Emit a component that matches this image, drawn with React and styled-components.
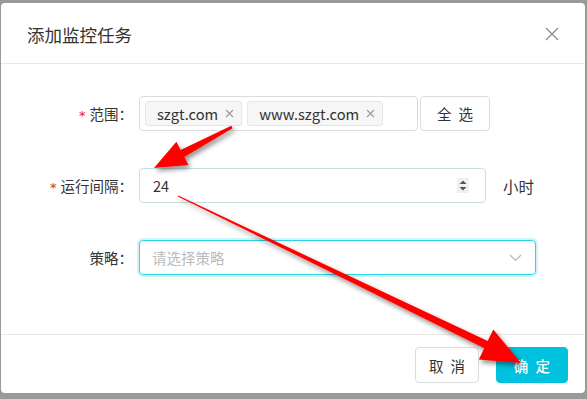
import React from 'react'
import styled, { createGlobalStyle } from 'styled-components'

const GlobalStyle = createGlobalStyle`
  html, body {
    margin: 0;
    padding: 0;
    background: #9a9a9a;
    font-family: "Noto Sans CJK SC", "Noto Sans", sans-serif;
  }
`

// Icons
const CloseIcon = () => (
  <svg width="14" height="14" viewBox="0 0 14 14">
    <path d="M1 1 L13 13 M13 1 L1 13" stroke="#8c8c8c" strokeWidth="1.3" />
  </svg>
)

const TagClose = () => (
  <svg width="9" height="9" viewBox="0 0 9 9">
    <path d="M1 1 L8 8 M8 1 L1 8" stroke="#999" strokeWidth="1.1" />
  </svg>
)

const Spinner = () => (
  <svg width="12" height="15" viewBox="0 0 12 15">
    <rect width="12" height="15" fill="#f0f0f0" />
    <path d="M6 2.5 L9.5 6 L2.5 6 Z M6 12.5 L9.5 9 L2.5 9 Z" fill="#555" />
  </svg>
)

const Chevron = () => (
  <svg width="13" height="8" viewBox="0 0 13 8">
    <path d="M1 1 L6.5 6.5 L12 1" stroke="#b5b5b5" strokeWidth="1.2" fill="none" />
  </svg>
)

// Annotation arrows drawn over the dialog
const Arrows = () => (
  <ArrowLayer width="587" height="399" viewBox="0 0 587 399">
    <defs>
      <filter id="sh" x="-20%" y="-20%" width="140%" height="140%">
        <feDropShadow dx="2" dy="3" stdDeviation="2.5" floodColor="#000" floodOpacity="0.45" />
      </filter>
    </defs>
    <g filter="url(#sh)" fill="#ff0000">
      <polygon points="232.7,128.3 231.3,125.7 180.6,150 176.4,141.8 154,168 188.4,165 184.3,157" />
      <polygon points="178.2,195.6 177.8,196.4 484.3,348.2 478.8,359.5 521,363 493.3,329.5 487.7,341" />
    </g>
  </ArrowLayer>
)

const App = () => {
  return (
    <>
      <GlobalStyle />
      <Modal>
        <Header>
          <Title>添加监控任务</Title>
          <CloseButton><CloseIcon /></CloseButton>
        </Header>
        <Body>
          <Row>
            <Label><Star>*</Star>范围：</Label>
            <TagBox>
              <Tag>szgt.com<TagClose /></Tag>
              <Tag>www.szgt.com<TagClose /></Tag>
            </TagBox>
            <Button $width={70}>全 选</Button>
          </Row>
          <Row>
            <Label><Star>*</Star>运行间隔：</Label>
            <NumberInput>
              <span>24</span>
              <Spinner />
            </NumberInput>
            <Unit>小时</Unit>
          </Row>
          <Row>
            <Label>策略：</Label>
            <Select>
              <Placeholder>请选择策略</Placeholder>
              <Chevron />
            </Select>
          </Row>
        </Body>
        <Footer>
          <Button $width={64} $height={36}>取 消</Button>
          <Button $width={72} $height={36} $primary>确 定</Button>
        </Footer>
        <Arrows />
      </Modal>
    </>
  )
}

// Styles
const Modal = styled.div`
  position: relative;
  margin: 3px 0 0 1px;
  width: 584px;
  height: 390px;
  background: #fff;
  border-radius: 4px;
  display: flex;
  flex-direction: column;
`

const ArrowLayer = styled.svg`
  position: absolute;
  left: -1px;
  top: -3px;
  pointer-events: none;
`

const Header = styled.div`
  height: 60px;
  padding: 0 26px 0 26px;
  display: flex;
  align-items: center;
  justify-content: space-between;
  border-bottom: 1px solid #e8e8e8;
`

const Title = styled.div`
  font-size: 17.5px;
  color: #333;
  margin-top: 2px;
`

const CloseButton = styled.div`
  display: flex;
  margin-top: 2px;
`

const Body = styled.div`
  flex: 1;
  padding-top: 32px;
  display: flex;
  flex-direction: column;
  gap: 37px;
`

const Row = styled.div`
  display: flex;
  align-items: center;
  height: 35px;
`

const Label = styled.div`
  width: 138px;
  padding-right: 6px;
  box-sizing: border-box;
  text-align: right;
  font-size: 14.5px;
  color: #333;
`

const Star = styled.span`
  color: #e02020;
  margin-right: 4px;
  font-family: "DejaVu Sans", sans-serif;
  font-size: 13px;
`

const TagBox = styled.div`
  box-sizing: border-box;
  width: 279px;
  height: 35px;
  border: 1px solid #dcdcdc;
  border-radius: 4px;
  display: flex;
  align-items: center;
  gap: 5px;
  padding-left: 5px;
`

const Tag = styled.div`
  box-sizing: border-box;
  height: 25px;
  display: flex;
  align-items: center;
  gap: 7px;
  padding: 0 7px 0 11px;
  background: #f6f6f6;
  border: 1px solid #e6e6e6;
  border-radius: 3px;
  font-size: 14.7px;
  color: #333;
`

const Button = styled.div`
  box-sizing: border-box;
  width: ${p => p.$width}px;
  height: ${p => p.$height || 35}px;
  margin-left: 2px;
  display: flex;
  align-items: center;
  justify-content: center;
  border: 1px solid ${p => p.$primary ? '#00c1de' : '#dcdcdc'};
  background: ${p => p.$primary ? '#00c1de' : '#fff'};
  color: ${p => p.$primary ? '#fff' : '#333'};
  border-radius: 4px;
  font-size: 14.5px;
  letter-spacing: 2px;
  padding-left: 2px;
  font-weight: ${p => p.$primary ? 500 : 400};
`

const NumberInput = styled.div`
  box-sizing: border-box;
  width: 347px;
  height: 35px;
  border: 1px solid #c8dfe2;
  border-radius: 4px;
  display: flex;
  align-items: center;
  justify-content: space-between;
  padding: 0 16px 0 13px;
  font-size: 14.5px;
  color: #333;
`

const Unit = styled.div`
  margin-left: 17px;
  font-size: 15.5px;
  color: #333;
`

const Select = styled.div`
  box-sizing: border-box;
  width: 397px;
  height: 35px;
  border: 1px solid #2ad5e8;
  box-shadow: 0 0 0 2px rgba(0, 193, 222, 0.18);
  border-radius: 4px;
  display: flex;
  align-items: center;
  justify-content: space-between;
  padding: 0 13px 0 12px;
`

const Placeholder = styled.span`
  font-size: 14.5px;
  color: #bbb;
`

const Footer = styled.div`
  height: 59px;
  border-top: 1px solid #e8e8e8;
  box-sizing: border-box;
  display: flex;
  justify-content: flex-end;
  align-items: flex-start;
  padding: 12px 17px 0 0;
  gap: 15px;
`

export default App
